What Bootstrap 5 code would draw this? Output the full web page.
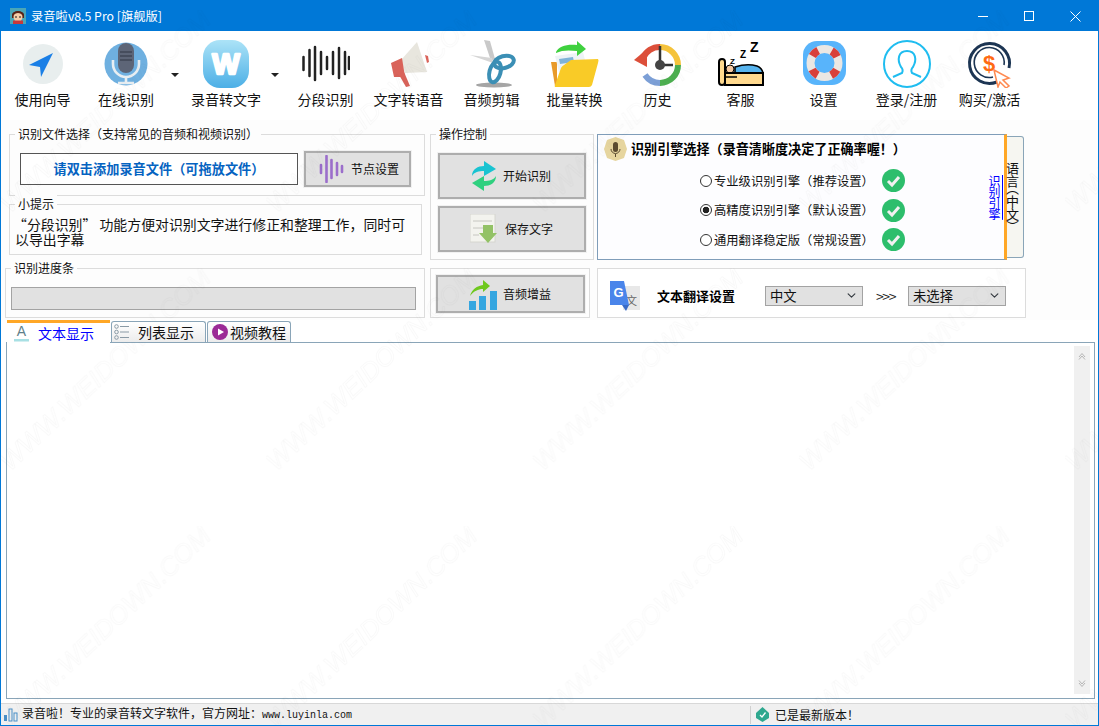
<!DOCTYPE html>
<html lang="zh-CN">
<head>
<meta charset="utf-8">
<title>录音啦</title>
<link href="https://cdn.jsdelivr.net/npm/bootstrap@5.3.0/dist/css/bootstrap.min.css" rel="stylesheet">
<style>
html,body{margin:0;background:#fff;overflow:hidden}
body{font-family:"Noto Sans CJK SC","Liberation Sans",sans-serif;font-size:12px;color:#111;line-height:18px}
.appwin{width:1099px;height:726px;border:1px solid #0078d7;position:relative;overflow:hidden;background:#fff}
.titlerow{height:30px;background:#0078d7;color:#fff;font-size:12.3px;padding-left:9px;gap:5px}
.winbtn{width:46px;height:30px}
.toolrow{height:89px;background:#fff}
.toolitem{width:83px;padding-top:9px;text-align:center}
.toolitem.wide{width:84px}
.toolitem svg{display:block;margin:0 auto 2px}
.toolitem span{display:block;white-space:nowrap;font-size:14px}
.caretbox{width:16px;height:89px;padding-top:42px;padding-left:3px}
.caretglyph{width:0;height:0;border:4px solid transparent;border-top-color:#222;border-bottom-width:0}
.ctrlarea{height:200px;background:#fdfdfd}
.colleft{width:420px;margin-left:4px;padding-top:14px}
.colmid{width:164px;margin-left:5px;padding-top:14px}
.colright{width:429px;margin-left:3px;padding-top:14px}
.grp{border:1px solid #dcdcdc}
.lgd{display:table;margin:-10px 0 0 5px;padding:0 3px;height:18px;background:#fdfdfd;white-space:nowrap}
.lgdgap{margin-bottom:10px}
.g1{width:416px;height:62px;margin-left:4px}
.g2{width:413px;height:51px;margin:8px 0 0 4px}
.g3{width:420px;height:50px;margin-top:13px}
.g4{width:164px;height:126px}
.g6{width:160px;height:50px;margin-top:8px;padding-top:6px}
.g7{width:429px;height:50px;margin-top:8px;background:#fff}
.filebtn{width:278px;height:32px;margin-left:10px;border:1.5px solid #555;background:#fff;color:#0563c1;font-weight:700;font-size:13.2px;border-radius:0;padding:0;display:flex;align-items:center;justify-content:center}
.flatbtn{background:#e1e1e1;border:2px solid #adadad;box-shadow:0 0 0 1px #f1f1f1;border-radius:0;padding:0;font-size:12px;color:#111;display:flex;align-items:center;white-space:nowrap}
.nodebtn{width:107px;height:36px;margin-left:6px;padding-left:13px;gap:7px}
.opbtn{width:148px;height:46px;margin:0 0 7px 7px;padding-left:31px;gap:6px}
.savebtn{padding-left:30px;gap:8px}
.gainbtn{width:149px;height:38px;margin-left:5px;padding-left:31px;gap:6px}
.g1row{margin-top:8px}
.tiptext{font-size:13.9px;line-height:15px;padding:4px 0 0 5px;white-space:nowrap}
.firstline{margin-left:-2px}
.barwrap{height:23px;width:405px;margin:10px 0 0 5px;background:#e1e1e1;border:1.5px solid #a3a3a3;border-radius:0}
.enginebox{width:410px;height:126px;border:1px solid #7f9db9;border-right:3px solid #ffa726;background:#fdfdff;padding-top:2px}
.enginehead{height:24px;padding-left:6px;gap:4px;font-weight:700;font-size:13.1px;color:#000;white-space:nowrap}
.radiorow{height:29.5px;gap:2px;font-size:12.3px;white-space:nowrap}
.radiorow label{width:166px}
.radiolist{margin:5px 0 0 102px}
.radiodot{width:12px;height:12px;margin:0!important;border:1px solid #333;background-color:#fff;flex:none}
.radiodot:checked{background-color:#fff;border-color:#333;background-image:radial-gradient(circle,#222 0 3px,transparent 3.6px)}
.vlink{writing-mode:vertical-rl;text-orientation:upright;color:#00f;font-size:12px;letter-spacing:-.8px;line-height:11px;height:46px;width:12px;margin:14px 4px 0 auto;text-decoration:underline;text-underline-position:right;white-space:nowrap}
.langtab{width:17px;height:122px;margin-top:2px;border:1px solid #8aa5b8;border-left:0;border-radius:0 3px 3px 0;background:#f6f6f1;writing-mode:vertical-rl;text-orientation:upright;font-size:13px;line-height:11px;padding:25px 5px 0 0;color:#111;white-space:nowrap;text-align:left;font-feature-settings:"vpal"}
.transrow{height:48px;padding:5px 0 0 12px}
.transtitle{font-weight:700;font-size:13px;margin-left:17px;width:108px;color:#000;white-space:nowrap}
.winselect{width:98px;height:20px;padding:0 0 0 4px;background-color:#e1e1e1;border:1px solid #a3a3a3;border-radius:0;font-size:13.33px;line-height:18px;background-position:right 5px center;background-size:11px 9px;color:#111;font-family:inherit}
.arrowsmark{width:45px;text-align:center;font-size:14px;color:#222;letter-spacing:-1.4px}
.tabstrip{height:22px;padding-left:6px;position:relative;z-index:2}
.tabon{width:103px;height:23px;background:#fff;border-top:3px solid #ffa726;color:#00f;font-size:14px;padding-left:7px;gap:9px;margin-bottom:-1px}
.taboff{height:21px;border:1px solid #8aa5b8;border-bottom:0;border-radius:3px 3px 0 0;background:linear-gradient(#fff,#ececec);font-size:14px;color:#111}
.tab2{width:95px;margin-left:1px;padding-left:2px;gap:8px}
.tab3{width:84px;margin-left:1px;padding-left:4px;gap:2px}
.textpane{width:1089px;height:357px;margin-left:5px;border:1px solid #8aa5b8;background:#fff;padding:3px 4px 4px 0}
.vscroll{width:16px;background:#f0f0f0;height:100%;padding:6px 0}
.paneGap{height:4px;background:#fff}
.statusrow{height:22px;background:#f0f0f0;border-top:1px solid #d8d8d8;font-size:12px;color:#111;white-space:nowrap}
.statuscell{width:749px;padding-left:2px;gap:4px}
.statuscell2{border-left:1px solid #d0d0d0;padding-left:4px;gap:5px}
.monotext{font-family:"Liberation Mono",monospace;font-size:10px}
.wmark{position:absolute;left:-1px;top:-1px;width:1099px;height:726px;pointer-events:none}
.wmtext{font-family:"Liberation Sans",sans-serif;font-size:26px;font-style:italic;fill:none;stroke:rgba(0,0,0,.026);stroke-width:.7}
</style>
</head>
<body>
<div class="appwin d-flex flex-column">
  <div class="titlerow d-flex align-items-center flex-shrink-0">
    <svg width="16" height="16" viewBox="0 0 16 16"><rect width="16" height="16" fill="#4aa6b8"/><path d="M2 7C2 2 14 2 14 7V10H2Z" fill="#5a2418"/><circle cx="8" cy="9" r="4.5" fill="#f6cda8"/><path d="M3 7Q8 3 13 7L13 5Q8 1 3 5Z" fill="#5a2418"/><rect x="3" y="12.5" width="10" height="3.5" fill="#c9383a"/><circle cx="6" cy="9" r=".8"/><circle cx="10" cy="9" r=".8"/></svg>
    <span>录音啦v8.5 Pro [旗舰版]</span>
    <div class="ms-auto d-flex">
      <div class="winbtn d-flex align-items-center justify-content-center"><svg width="10" height="10"><path d="M0 5.5H10" stroke="#fff"/></svg></div>
      <div class="winbtn d-flex align-items-center justify-content-center"><svg width="10" height="10"><rect x=".5" y=".5" width="9" height="9" fill="none" stroke="#fff"/></svg></div>
      <div class="winbtn d-flex align-items-center justify-content-center"><svg width="11" height="11"><path d="M.5 .5L10.5 10.5M10.5 .5L.5 10.5" stroke="#fff"/></svg></div>
    </div>
  </div>

  <div class="toolrow d-flex flex-shrink-0">
    <div class="toolitem"><svg width="48" height="48" viewBox="0 0 48 48"><circle cx="24" cy="24" r="20" fill="#e8eeee"/><path d="M34 13L10 25L21 27L22 37Z" fill="#1a7fe6"/></svg><span>使用向导</span></div>
    <div class="toolitem wide"><svg width="48" height="48" viewBox="0 0 48 48"><circle cx="24" cy="24" r="21.5" fill="#6fb0e0"/><rect x="16" y="3" width="16" height="30" rx="8" fill="#5d6577"/><path d="M18 12h12M18 16h12M18 20h12" stroke="#3f4656" stroke-width="1.6"/><path d="M11 20v4a13 13 0 0 0 26 0v-4" fill="none" stroke="#e8eef2" stroke-width="2.6"/><path d="M24 37v5M16 43h16" stroke="#e8eef2" stroke-width="2.6"/></svg><span>在线识别</span></div>
    <div class="caretbox"><div class="caretglyph"></div></div>
    <div class="toolitem wide"><svg width="48" height="48" viewBox="0 0 48 48"><defs><linearGradient id="gw" x1="0" y1="0" x2="0" y2="1"><stop offset="0" stop-color="#ace3f7"/><stop offset="1" stop-color="#4cafe6"/></linearGradient></defs><rect x="1" y="0" width="46" height="48" rx="17" fill="url(#gw)"/><text x="24" y="34" text-anchor="middle" font-family="Liberation Sans" font-weight="700" font-size="29" fill="#fff" stroke="#fff" stroke-width="2.5" stroke-linejoin="round">W</text></svg><span>录音转文字</span></div>
    <div class="caretbox"><div class="caretglyph"></div></div>
    <div class="toolitem"><svg width="48" height="48" viewBox="0 0 48 48"><g stroke="#222" stroke-width="2.5" stroke-linecap="round"><path d="M1.5 17v13M7.5 10v26M13 7v33M19 12v22M25 17v12M31 12v22M37 8v30M43 12v22M47 17v12"/></g></svg><span>分段识别</span></div>
    <div class="toolitem"><svg width="48" height="48" viewBox="0 0 48 48"><path d="M13 33L19 32L25 46L21 47Z" fill="#d9635a"/><path d="M16 20L32 2L42 32L20 33Z" fill="#e8e6de"/><path d="M6 23L17 18L20 37L9 37Z" fill="#d9635a"/><path d="M40 15L43 16L44 22L42 23Z" fill="#d9635a"/></svg><span>文字转语音</span></div>
    <div class="toolitem"><svg width="48" height="48" viewBox="0 0 48 48"><ellipse cx="26" cy="45" rx="18" ry="2.500" fill="#a5a5a5"/><path d="M16 0L22 1L27 19L23 21Z" fill="#c9c9c9"/><path d="M2 15L24 18L25 23Z" fill="#d6d6d6"/><ellipse cx="36" cy="22" rx="10" ry="6" transform="rotate(-15 36 22)" fill="none" stroke="#3b8fb5" stroke-width="4"/><ellipse cx="27" cy="32" rx="5.500" ry="10.500" transform="rotate(15 27 32)" fill="none" stroke="#3b8fb5" stroke-width="4"/></svg><span>音频剪辑</span></div>
    <div class="toolitem"><svg width="48" height="48" viewBox="0 0 48 48"><path d="M0 22H6V46H4Z" fill="#e89a2a"/><path d="M4 16L32 12L36 28L8 32Z" fill="#eef3f6"/><path d="M8 19L22 17L23 22L9 24Z" fill="#7fb3d8"/><path d="M20 20L47 19Q48 20 47 23L41 45Q40 47 38 47H5Q3 47 4 45L10 28Q11 26 13 25Z" fill="#f9cb27"/><path d="M5 12C8 6 16 4 26 5V1L35 9L26 16V11C18 10 11 10 5 13Z" fill="#3fd13f"/></svg><span>批量转换</span></div>
    <div class="toolitem"><svg width="48" height="48" viewBox="0 0 48 48"><g fill="none" stroke-width="6"><path d="M26 7A18 18 0 0 1 44 25" stroke="#f5c33b"/><path d="M44 25A18 18 0 0 1 26 43" stroke="#4caf50"/><path d="M26 43A18 18 0 0 1 11 35" stroke="#7c9fd6"/><path d="M9 18A18 18 0 0 1 26 7" stroke="#dc4f3a"/></g><path d="M13 9L13 27L0 20Z" fill="#dc4f3a"/><path d="M26 6V25H39" fill="none" stroke="#333" stroke-width="2.5"/><circle cx="26" cy="25" r="5" fill="#444"/></svg><span>历史</span></div>
    <div class="toolitem"><svg width="48" height="48" viewBox="0 0 48 48"><text x="33" y="12" font-family="Liberation Sans" font-weight="700" font-size="14" fill="#000">Z</text><text x="23" y="18" font-family="Liberation Sans" font-weight="700" font-size="10" fill="#000">Z</text><text x="13" y="24" font-family="Liberation Sans" font-weight="700" font-size="8" fill="#000">Z</text><path d="M18 33V27Q30 23 40 26Q45 28 46 33Z" fill="#57b4ee" stroke="#000" stroke-width="1.6"/><circle cx="13" cy="29" r="4" fill="#f5c8a0" stroke="#000" stroke-width="1"/><rect x="8" y="33" width="38" height="12" fill="#ffd98e" stroke="#000" stroke-width="2"/><rect x="2" y="19" width="6" height="26" rx="3" fill="#ffd98e" stroke="#000" stroke-width="2"/><path d="M9 37H20" stroke="#000" stroke-width="1.500"/></svg><span>客服</span></div>
    <div class="toolitem"><svg width="48" height="48" viewBox="0 0 48 48"><rect x="3" y="1" width="43" height="44" rx="14" fill="#58b4fb"/><circle cx="24.500" cy="23" r="14" fill="none" stroke="#ebe7e3" stroke-width="8"/><circle cx="24.500" cy="23" r="14" fill="none" stroke="#d8403a" stroke-width="8" stroke-dasharray="8 14" transform="rotate(29 24.500 23)"/></svg><span>设置</span></div>
    <div class="toolitem"><svg width="48" height="48" viewBox="0 0 48 48"><circle cx="24" cy="24" r="23" fill="none" stroke="#1fbdf0" stroke-width="2"/><path d="M10 37L19 33C20 31 20 29 18 27C14 20 15 11 24 11C33 11 34 20 30 27C28 29 28 31 29 33L38 37" fill="none" stroke="#1fbdf0" stroke-width="2"/></svg><span>登录/注册</span></div>
    <div class="toolitem"><svg width="48" height="48" viewBox="0 0 48 48"><path d="M31 42A20 20 0 1 1 43 28" fill="none" stroke="#1c3553" stroke-width="3"/><path d="M27 37A15 15 0 1 1 38 25" fill="none" stroke="#1c3553" stroke-width="1.600"/><text x="23" y="31" text-anchor="middle" font-family="Liberation Sans" font-weight="700" font-size="22" fill="#ff6a13">$</text><path d="M28 30L43 38L37 40L43 46L40 48L34 42L32 47Z" fill="#fff" stroke="#ff8a50" stroke-width="1.500"/></svg><span>购买/激活</span></div>
  </div>

  <div class="ctrlarea d-flex flex-shrink-0">
    <div class="colleft">
      <div class="grp g1">
        <div class="lgd">识别文件选择（支持常见的音频和视频识别）</div>
        <div class="d-flex align-items-center g1row">
          <button class="btn filebtn" type="button">请双击添加录音文件（可拖放文件）</button>
          <button class="btn flatbtn nodebtn" type="button"><svg width="25" height="28" viewBox="0 0 25 28" class="flex-shrink-0"><g stroke="#9b6ecb" stroke-width="2.600" stroke-linecap="round"><path d="M2 10v8M7.500 1v26M12.500 5v18M18 8v12M23 11v6"/></g></svg><span>节点设置</span></button>
        </div>
      </div>
      <div class="grp g2">
        <div class="lgd">小提示</div>
        <div class="tiptext"><span class="firstline">“分段识别” 功能方便对识别文字进行修正和整理工作，同时可</span><br>以导出字幕</div>
      </div>
      <div class="grp g3">
        <div class="lgd">识别进度条</div>
        <div class="progress barwrap"></div>
      </div>
    </div>

    <div class="colmid">
      <div class="grp g4">
        <div class="lgd lgdgap">操作控制</div>
        <button class="btn flatbtn opbtn" type="button"><svg width="26" height="30" viewBox="0 0 26 30" class="flex-shrink-0"><path d="M1 15C1 8 7 5 13 5V0L25 8L13 15V10C8 10 3 11 1 15Z" fill="#19c3d1"/><path d="M25 15C25 22 19 25 13 25V30L1 22L13 15V20C18 20 23 19 25 15Z" fill="#2fd07f"/></svg><span>开始识别</span></button>
        <button class="btn flatbtn opbtn savebtn" type="button"><svg width="27" height="30" viewBox="0 0 27 30" class="flex-shrink-0"><rect width="25" height="28" fill="#f3f3ee" stroke="#d6d6d0"/><path d="M3 7h19M3 14h19M3 21h6" stroke="#c6c6c0"/><path d="M13 11h10v8h4L18 29L9 19h4Z" fill="#93c266"/></svg><span>保存文字</span></button>
      </div>
      <div class="grp g6">
        <button class="btn flatbtn gainbtn" type="button"><svg width="28" height="32" viewBox="0 0 28 32" class="flex-shrink-0"><rect x="0" y="23" width="7" height="9" fill="#35a6e0"/><rect x="10" y="18" width="7" height="14" fill="#35a6e0"/><rect x="21" y="13" width="7" height="19" fill="#35a6e0"/><path d="M1 18C3 11 8 8 14 7V2L21 8L14 14V11C9 11 5 13 1 18Z" fill="#6fc81e"/></svg><span>音频增益</span></button>
      </div>
    </div>

    <div class="colright">
      <div class="d-flex">
        <div class="enginebox">
          <div class="enginehead d-flex align-items-center">
            <svg width="23" height="24" viewBox="0 0 23 24" class="flex-shrink-0"><path d="M11.500 0L20 3L23 12L20 21L11.500 24L3 21L0 12L3 3Z" fill="#e6d59f"/><rect x="9" y="5" width="5" height="10" rx="2.500" fill="#5a4a30"/><path d="M7 12a4.500 4.500 0 0 0 9 0M11.500 17v3" fill="none" stroke="#5a4a30"/></svg>
            <span>识别引擎选择（录音清晰度决定了正确率喔！）</span>
          </div>
          <div class="d-flex">
            <div class="radiolist">
              <div class="radiorow d-flex align-items-center"><input class="form-check-input radiodot" type="radio" name="eng"><label>专业级识别引擎（推荐设置）</label><svg width="23" height="23" viewBox="0 0 23 23"><circle cx="11.500" cy="11.500" r="11.500" fill="#2dbe6c"/><path d="M6 12L10 16L17 8" fill="none" stroke="#f1f1f1" stroke-width="3"/></svg></div>
              <div class="radiorow d-flex align-items-center"><input class="form-check-input radiodot" type="radio" name="eng" checked><label>高精度识别引擎（默认设置）</label><svg width="23" height="23" viewBox="0 0 23 23"><circle cx="11.500" cy="11.500" r="11.500" fill="#2dbe6c"/><path d="M6 12L10 16L17 8" fill="none" stroke="#f1f1f1" stroke-width="3"/></svg></div>
              <div class="radiorow d-flex align-items-center"><input class="form-check-input radiodot" type="radio" name="eng"><label>通用翻译稳定版（常规设置）</label><svg width="23" height="23" viewBox="0 0 23 23"><circle cx="11.500" cy="11.500" r="11.500" fill="#2dbe6c"/><path d="M6 12L10 16L17 8" fill="none" stroke="#f1f1f1" stroke-width="3"/></svg></div>
            </div>
            <div class="vlink">识别引擎</div>
          </div>
        </div>
        <div class="langtab">语言（中文）</div>
      </div>
      <div class="grp g7">
        <div class="transrow d-flex align-items-center">
          <svg width="30" height="30" viewBox="0 0 30 30" class="flex-shrink-0"><rect x="13" y="5" width="17" height="24" fill="#e8e8e8"/><text x="21.500" y="24" text-anchor="middle" font-family="Noto Sans CJK SC" font-size="11" fill="#666">文</text><path d="M0 0H14L19 24H0Z" fill="#4a85ea"/><path d="M12 24H19L16 30Z" fill="#3a6bc6"/><text x="8.500" y="16" text-anchor="middle" font-family="Liberation Sans" font-weight="700" font-size="13" fill="#fff">G</text></svg>
          <div class="transtitle">文本翻译设置</div>
          <select class="form-select winselect flex-shrink-0"><option>中文</option></select>
          <div class="arrowsmark">&gt;&gt;&gt;</div>
          <select class="form-select winselect flex-shrink-0"><option>未选择</option></select>
        </div>
      </div>
    </div>
  </div>

  <div class="tabstrip d-flex align-items-end flex-shrink-0">
    <div class="tabon d-flex align-items-center">
      <svg width="15" height="18" viewBox="0 0 15 18" class="flex-shrink-0"><text x="7.500" y="12" text-anchor="middle" font-family="Liberation Sans" font-size="14" fill="#5f7f8a">A</text><rect y="15" width="15" height="2.500" fill="#a8e0e4"/></svg>
      <span>文本显示</span>
    </div>
    <div class="taboff tab2 d-flex align-items-center">
      <svg width="16" height="16" viewBox="0 0 16 16" class="flex-shrink-0"><g fill="none" stroke="#8a9aa5"><circle cx="2.500" cy="2.500" r="1.800"/><circle cx="2.500" cy="8" r="1.800"/><circle cx="2.500" cy="13.500" r="1.800"/><path d="M6 2.500h9M6 8h9M6 13.500h9"/></g></svg>
      <span>列表显示</span>
    </div>
    <div class="taboff tab3 d-flex align-items-center">
      <svg width="16" height="16" viewBox="0 0 16 16" class="flex-shrink-0"><circle cx="8" cy="8" r="8" fill="#9b2a96"/><path d="M6 4.500L12 8L6 11.500Z" fill="#fff"/></svg>
      <span>视频教程</span>
    </div>
  </div>

  <div class="textpane d-flex justify-content-end flex-shrink-0">
    <div class="vscroll d-flex flex-column justify-content-between align-items-center">
      <svg width="8" height="8" viewBox="0 0 8 8"><path d="M1 5L4 1.500L7 5M1 7.500L4 4L7 7.500" fill="none" stroke="#b5b5b5"/></svg>
      <svg width="8" height="8" viewBox="0 0 8 8"><path d="M1 3L4 6.500L7 3M1 .5L4 4L7 .5" fill="none" stroke="#b5b5b5"/></svg>
    </div>
  </div>
  <div class="paneGap flex-shrink-0"></div>

  <div class="statusrow d-flex align-items-center flex-shrink-0">
    <div class="statuscell d-flex align-items-center">
      <svg width="15" height="15" viewBox="0 0 15 15" class="flex-shrink-0"><rect x="1" y="8" width="3" height="6" fill="#4a90c8"/><rect x="6" y="2" width="3" height="12" fill="none" stroke="#4a90c8"/><rect x="11" y="6" width="3" height="8" fill="none" stroke="#4a90c8"/></svg>
      <span>录音啦！专业的录音转文字软件，官方网址：<span class="monotext">www.luyinla.com</span></span>
    </div>
    <div class="statuscell2 d-flex align-items-center">
      <svg width="15" height="15" viewBox="0 0 15 15" class="flex-shrink-0"><path d="M7.500 0L14 6V11L7.500 15L1 11V6Z" fill="#2fa88f"/><path d="M5 8L7 10L10.500 5.500" fill="none" stroke="#fff" stroke-width="1.300"/></svg>
      <span>已是最新版本！</span>
    </div>
  </div>

  <svg class="wmark" viewBox="0 0 1099 726" aria-hidden="true">
    <defs><pattern id="wmp" x="0" y="10" width="266.300" height="258" patternUnits="userSpaceOnUse"><text class="wmtext" x="10" y="204" transform="rotate(-43.500 10 204)">WWW.WEIDOWN.COM</text></pattern></defs>
    <rect width="1099" height="726" fill="url(#wmp)"/>
  </svg>
</div>
<script src="https://cdn.jsdelivr.net/npm/bootstrap@5.3.0/dist/js/bootstrap.bundle.min.js"></script>
</body>
</html>
